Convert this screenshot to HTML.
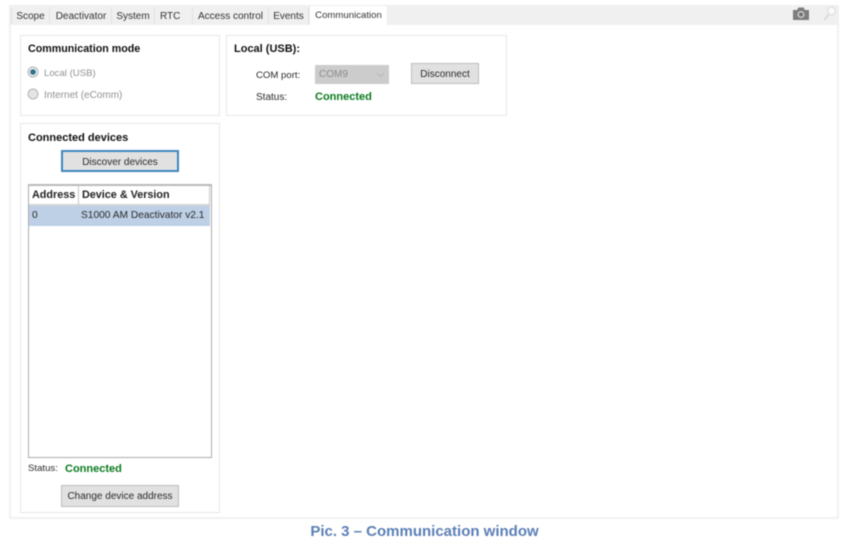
<!DOCTYPE html>
<html><head><meta charset="utf-8"><style>
html,body{margin:0;padding:0;background:#fff}
body{width:854px;height:539px;position:relative;overflow:hidden;font-family:"Liberation Sans",sans-serif;font-size:10px;color:#2a2a2a}
div,span.t{position:absolute;box-sizing:border-box}
#w{left:0;top:0;width:854px;height:539px;filter:blur(.45px)}
.t{white-space:nowrap;line-height:14px}
.b{font-weight:bold;color:#111;font-size:10.7px}
.g{background:#fff;border:1px solid #e8e8e8}
.tab{top:8px;height:16px;background:#f0f0f0;border-right:1px solid #e2e2e2;text-align:center;line-height:17px;white-space:nowrap;color:#333}
.btn{background:#e1e1e1;border:1px solid #bcbcbc;text-align:center;color:#2a2a2a;white-space:nowrap}
.c{color:#0b7a1f;font-weight:bold;font-size:11px}
.dis{color:#919191}
</style></head><body><div id="w">
<div style="left:9px;top:5px;width:830px;height:514px;background:#fff;border:2px solid #f1f1f1;border-top:0"></div>
<div style="left:9px;top:5px;width:830px;height:20px;background:#f0f0f0"></div>
<div class="tab" style="left:11px;width:39px;border-left:1px solid #e2e2e2">Scope</div>
<div class="tab" style="left:50px;width:62px;padding-left:1px">Deactivator</div>
<div class="tab" style="left:112px;width:43px">System</div>
<div class="tab" style="left:155px;width:38px;text-align:left;padding-left:5px">RTC</div>
<div class="tab" style="left:193px;width:76px">Access control</div>
<div class="tab" style="left:269px;width:40px">Events</div>
<div style="left:309px;top:5px;width:79px;height:20px;background:#fff;border:1px solid #ececec;border-bottom:0;text-align:center;line-height:19px;color:#333;font-size:9.6px">Communication</div>

<svg style="position:absolute;left:792px;top:6px" width="18" height="15" viewBox="0 0 18 15"><path d="M1 4h4l1.500-2.500h5L13 4h4v10H1z" fill="#7c7c7c"/><circle cx="9" cy="8.500" r="3.600" fill="#c8c8c8"/><circle cx="9" cy="8.500" r="2" fill="#707070"/></svg>
<svg style="position:absolute;left:822px;top:5px" width="16" height="17" viewBox="0 0 16 17"><circle cx="9.500" cy="6" r="4" fill="#f9f9f9" stroke="#e2e2e2" stroke-width="1.500"/><path d="M6.500 9.500L2.500 15" stroke="#dcdcdc" stroke-width="2.200" fill="none"/></svg>

<div class="g" style="left:20px;top:35px;width:200px;height:81px"></div>
<span class="t b" style="left:28px;top:42px">Communication mode</span>
<svg style="position:absolute;left:27px;top:66px" width="13" height="13"><circle cx="6" cy="6" r="5" fill="#e8eef2" stroke="#b0b0b0"/><circle cx="6" cy="6" r="2.800" fill="#2f6f8f"/></svg>
<span class="t dis" style="left:44px;top:67px;font-size:9.6px">Local (USB)</span>
<svg style="position:absolute;left:27px;top:88px" width="13" height="13"><circle cx="6" cy="6" r="5" fill="#e4e4e4" stroke="#b4b4b4"/></svg>
<span class="t dis" style="left:44px;top:89px">Internet (eComm)</span>

<div class="g" style="left:226px;top:35px;width:281px;height:81px"></div>
<span class="t b" style="left:234px;top:42px;font-size:11px">Local (USB):</span>
<span class="t" style="left:256px;top:69px;font-size:9.6px">COM port:</span>
<div style="left:315px;top:65px;width:74px;height:19px;background:#cccccc;color:#8a8a8a;padding-left:4px;line-height:20px">COM9</div>
<svg style="position:absolute;left:376px;top:72px" width="9" height="6"><path d="M1 1l3.500 3.500L8 1" fill="none" stroke="#b8b8b8"/></svg>
<div class="btn" style="left:411px;top:63px;width:68px;height:21px;line-height:21px">Disconnect</div>
<span class="t" style="left:256px;top:91px">Status:</span>
<span class="t c" style="left:315px;top:90px">Connected</span>

<div class="g" style="left:20px;top:123px;width:200px;height:390px"></div>
<span class="t b" style="left:28px;top:131px;font-size:11px">Connected devices</span>
<div class="btn" style="left:61px;top:150px;width:118px;height:22px;line-height:21px;border:2px solid #3f86bd">Discover devices</div>

<div style="left:28px;top:184px;width:184px;height:274px;background:#fff;border:1px solid #ababab;border-top:2px solid #bababa"></div>
<div style="left:29px;top:186px;width:50px;height:20px;background:#fff;border-right:1px solid #c8c8c8;border-bottom:2px solid #d4d4d4;line-height:18px;padding-left:3px;font-weight:bold;font-size:10.8px;color:#222">Address</div>
<div style="left:79px;top:186px;width:131px;height:20px;background:#fff;border-right:1px solid #c8c8c8;border-bottom:2px solid #d4d4d4;line-height:18px;padding-left:3px;font-weight:bold;font-size:10.8px;color:#222">Device &amp; Version</div>
<div style="left:29px;top:206px;width:181px;height:20px;background:#bdd0e6"></div>
<span class="t" style="left:32px;top:209px;font-size:10.2px">0</span>
<span class="t" style="left:81px;top:209px;font-size:10.2px">S1000 AM Deactivator v2.1</span>

<span class="t" style="left:28px;top:462px;font-size:9.6px">Status:</span>
<span class="t c" style="left:65px;top:462px">Connected</span>
<div class="btn" style="left:61px;top:485px;width:118px;height:22px;line-height:22px">Change device address</div>

<span class="t" style="left:0;width:849px;text-align:center;top:524px;font-size:15px;font-weight:bold;color:#5b7fb5;line-height:16px;display:block">Pic. 3 – Communication window</span>
</div></body></html>
